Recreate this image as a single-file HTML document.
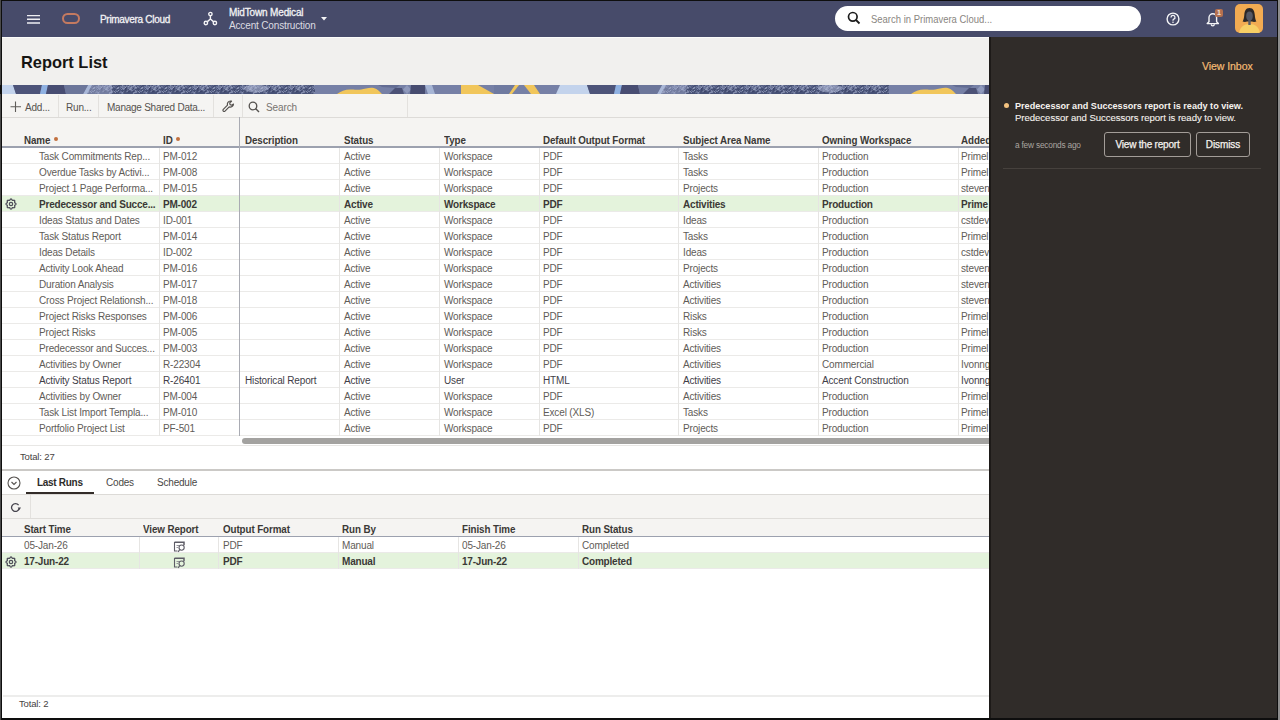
<!DOCTYPE html><html><head><meta charset="utf-8"><style>
*{margin:0;padding:0;box-sizing:border-box}
html,body{width:1280px;height:720px;overflow:hidden;background:#0e0e0e;font-family:"Liberation Sans",sans-serif}
.a{position:absolute}
.t{position:absolute;white-space:nowrap;line-height:16px}
.gh{position:absolute;white-space:nowrap;font-weight:bold;font-size:10.6px;color:#3b3936;letter-spacing:-0.1px;transform:scaleX(0.925);transform-origin:0 0}
.gb{font-size:10px;color:#5f5c58;letter-spacing:-0.15px}
.sel .gb{font-weight:bold;color:#3b3936;letter-spacing:-0.2px}
.vl{position:absolute;width:1px;background:#e6e5e3}
</style></head><body>

<div class="a" style="left:1278px;top:0;width:2px;height:720px;background:#8c8c8c"></div>
<div class="a" style="left:0;top:0;width:1px;height:720px;background:#4a4a4a"></div>
<div class="a" style="left:2px;top:1px;width:1275px;height:36px;background:#474b6a"></div>
<svg class="a" style="left:0;top:0" width="60" height="37" viewBox="0 0 60 37"><path d="M27 15.6H40M27 19.3H40M27 23H40" stroke="#eeeef2" stroke-width="1.4"/></svg>
<div class="a" style="left:62px;top:13px;width:18px;height:11px;border:2.1px solid #c47a60;border-radius:6px"></div>
<div class="t" style="left:100px;top:12px;font-size:10px;color:#f2f2f4;letter-spacing:-0.3px;-webkit-text-stroke:0.3px #f2f2f4">Primavera Cloud</div>
<svg class="a" style="left:203px;top:11px" width="15" height="15" viewBox="0 0 15 15"><g stroke="#f4f4f6" fill="none"><path d="M7.4 5V8L4.4 10.6M7.4 8L10.4 10.6" stroke-width="1.4"/><circle cx="7.4" cy="3.1" r="1.7" stroke-width="1.4"/><circle cx="2.9" cy="12" r="1.7" stroke-width="1.4"/><circle cx="11.9" cy="12" r="1.7" stroke-width="1.4"/></g></svg>
<div class="t" style="left:229px;top:5px;font-size:10px;color:#f2f2f4;letter-spacing:-0.15px;-webkit-text-stroke:0.3px #f2f2f4">MidTown Medical</div>
<div class="t" style="left:229px;top:18px;font-size:10px;color:#dcdce2;letter-spacing:-0.15px">Accent Construction</div>
<svg class="a" style="left:321px;top:17px" width="6" height="4" viewBox="0 0 6 4"><path d="M0 0H6L3 3.5Z" fill="#f4f4f6"/></svg>
<div class="a" style="left:835px;top:6px;width:306px;height:25px;background:#fff;border-radius:12.5px"></div>
<svg class="a" style="left:847px;top:11px" width="14" height="14" viewBox="0 0 14 14"><circle cx="5.8" cy="5.8" r="4.3" fill="none" stroke="#1c1c1c" stroke-width="1.7"/><line x1="9" y1="9" x2="12.5" y2="12.5" stroke="#1c1c1c" stroke-width="1.8"/></svg>
<div class="t" style="left:871px;top:10.7px;font-size:10.6px;color:#8a8681;letter-spacing:0;transform:scaleX(0.895);transform-origin:0 0">Search in Primavera Cloud...</div>
<svg class="a" style="left:1166px;top:12px" width="14" height="14" viewBox="0 0 14 14"><circle cx="7" cy="7" r="5.9" fill="none" stroke="#f4f4f6" stroke-width="1.4"/><path d="M5 5.4a2 2 0 1 1 2.8 1.8c-.6.3-.8.6-.8 1.2v.4" fill="none" stroke="#f4f4f6" stroke-width="1.3"/><circle cx="7" cy="10.3" r=".8" fill="#f4f4f6"/></svg>
<svg class="a" style="left:1206px;top:11px" width="14" height="16" viewBox="0 0 14 16"><path d="M3 10.8V6.6A3.8 3.8 0 0 1 10.6 6.6V10.8L12.4 12.6H1.2Z" fill="none" stroke="#f4f4f6" stroke-width="1.4" stroke-linejoin="round"/><path d="M5.2 13.2A1.6 1.6 0 0 0 8.4 13.2" fill="none" stroke="#f4f4f6" stroke-width="1.3"/></svg>
<div class="a" style="left:1215px;top:9px;width:8px;height:8px;background:#b4704f;border-radius:2px"></div>
<div class="t" style="left:1217px;top:5px;font-size:7px;color:#f7e4d4;font-weight:bold;line-height:16px">1</div>
<svg class="a" style="left:1235px;top:4px" width="28" height="29" viewBox="0 0 28 29"><defs><clipPath id="av"><rect width="28" height="29" rx="5"/></clipPath></defs><g clip-path="url(#av)"><rect width="28" height="29" fill="#f2ab52"/><path d="M4 29C5 23 9 20 14.5 20S24 23 25 29Z" fill="#f7cf66"/><path d="M14.5 4C10.5 4 9.5 7.5 9.3 11C9 14 8.5 16 7.6 17.6C9.5 18.3 11 18 12 17.6L17 17.6C18 18 19.5 18.3 21.4 17.6C20.5 16 20 14 19.8 11C19.5 7.5 18.5 4 14.5 4Z" fill="#2c2829"/><path d="M13.3 16V21H15.7V16Z" fill="#585c68"/><ellipse cx="14.5" cy="12" rx="3.3" ry="4.6" fill="#555865"/></g></svg>
<div class="a" style="left:2px;top:37px;width:987px;height:681px;background:#fff"></div>
<div class="a" style="left:2px;top:37px;width:987px;height:48px;background:#f1f0ee;border-top:1px solid #fbfbfa"></div>
<div class="t" style="left:21px;top:52px;font-size:16.4px;font-weight:bold;color:#161513;line-height:20px">Report List</div>
<svg class="a" style="left:0;top:85px" width="990" height="9" viewBox="0 0 990 9" shape-rendering="geometricPrecision"><defs><pattern id="tx" width="24" height="9" patternUnits="userSpaceOnUse"><rect width="24" height="9" fill="#465075"/><path d="M7.8 1.4l-1.6 -1.4" stroke="#8e98bb" stroke-width="0.8"/><path d="M21.8 1.9l-2.2 -1.3" stroke="#353c62" stroke-width="0.8"/><path d="M1.4 5.1l-2.4 -1.7" stroke="#353c62" stroke-width="0.8"/><path d="M1.2 2.0l-1.9 -1.6" stroke="#7983a8" stroke-width="0.8"/><path d="M13.4 6.1l-2.4 -1.4" stroke="#8e98bb" stroke-width="0.8"/><path d="M13.5 5.6l2.5 1.9" stroke="#353c62" stroke-width="0.8"/><path d="M14.1 4.1l1.9 -1.8" stroke="#a3acc9" stroke-width="0.8"/><path d="M2.0 2.7l2.8 1.3" stroke="#8e98bb" stroke-width="0.8"/><path d="M2.8 3.8l1.7 1.5" stroke="#8e98bb" stroke-width="0.8"/><path d="M18.3 5.2l2.0 1.7" stroke="#353c62" stroke-width="0.8"/><path d="M1.7 0.8l2.2 -1.1" stroke="#7983a8" stroke-width="0.8"/><path d="M15.5 8.9l1.9 2.1" stroke="#7983a8" stroke-width="0.8"/><path d="M0.5 4.2l-2.4 1.1" stroke="#7983a8" stroke-width="0.8"/><path d="M3.1 2.2l2.9 1.1" stroke="#353c62" stroke-width="0.8"/><path d="M9.6 2.5l-2.7 1.8" stroke="#7983a8" stroke-width="0.8"/><path d="M16.4 3.4l-1.7 -1.2" stroke="#a3acc9" stroke-width="0.8"/><path d="M0.3 7.5l-1.9 -1.2" stroke="#7983a8" stroke-width="0.8"/><path d="M14.6 2.9l-2.5 -1.5" stroke="#353c62" stroke-width="0.8"/><path d="M9.6 3.5l2.5 -1.2" stroke="#a3acc9" stroke-width="0.8"/><path d="M10.6 1.0l-1.7 -1.6" stroke="#7983a8" stroke-width="0.8"/><path d="M14.7 0.6l-2.4 -1.8" stroke="#7983a8" stroke-width="0.8"/><path d="M14.5 4.3l-2.8 1.6" stroke="#7983a8" stroke-width="0.8"/><path d="M2.1 0.9l2.6 2.0" stroke="#a3acc9" stroke-width="0.8"/><path d="M12.4 1.8l1.7 -1.9" stroke="#7983a8" stroke-width="0.8"/><path d="M23.5 7.8l2.3 -1.4" stroke="#a3acc9" stroke-width="0.8"/><path d="M12.8 7.0l2.5 -2.0" stroke="#353c62" stroke-width="0.8"/><path d="M17.8 2.0l2.0 -2.2" stroke="#7983a8" stroke-width="0.8"/><path d="M11.3 1.7l2.2 2.1" stroke="#7983a8" stroke-width="0.8"/><path d="M1.9 0.9l1.8 -1.6" stroke="#8e98bb" stroke-width="0.8"/><path d="M11.5 5.9l-2.8 -2.1" stroke="#a3acc9" stroke-width="0.8"/><path d="M11.5 1.6l1.6 1.6" stroke="#8e98bb" stroke-width="0.8"/><path d="M17.4 1.5l-1.5 2.0" stroke="#a3acc9" stroke-width="0.8"/><path d="M14.7 5.4l2.5 1.2" stroke="#a3acc9" stroke-width="0.8"/><path d="M0.5 7.2l-2.3 -1.5" stroke="#a3acc9" stroke-width="0.8"/><path d="M19.8 1.9l1.8 -1.9" stroke="#7983a8" stroke-width="0.8"/><path d="M6.2 3.8l-1.6 2.1" stroke="#353c62" stroke-width="0.8"/><path d="M19.9 7.9l-2.3 -2.0" stroke="#a3acc9" stroke-width="0.8"/><path d="M14.6 7.0l-1.8 1.7" stroke="#8e98bb" stroke-width="0.8"/><path d="M13.4 2.9l2.7 -2.1" stroke="#8e98bb" stroke-width="0.8"/><path d="M6.0 2.5l-2.3 -1.9" stroke="#8e98bb" stroke-width="0.8"/><path d="M10.6 5.5l-2.5 1.6" stroke="#353c62" stroke-width="0.8"/><path d="M12.2 2.2l2.9 -2.0" stroke="#a3acc9" stroke-width="0.8"/><path d="M10.0 3.5l1.6 -1.5" stroke="#a3acc9" stroke-width="0.8"/><path d="M16.1 7.1l-2.9 1.2" stroke="#a3acc9" stroke-width="0.8"/><path d="M23.2 2.0l-2.1 1.2" stroke="#a3acc9" stroke-width="0.8"/><path d="M3.9 3.9l2.0 -1.4" stroke="#8e98bb" stroke-width="0.8"/><path d="M17.3 0.2l2.2 -1.5" stroke="#7983a8" stroke-width="0.8"/><path d="M12.3 0.6l-3.0 -1.1" stroke="#7983a8" stroke-width="0.8"/><path d="M1.0 7.0l2.6 2.0" stroke="#7983a8" stroke-width="0.8"/><path d="M9.7 4.8l2.6 -1.3" stroke="#a3acc9" stroke-width="0.8"/><path d="M10.2 0.7l-2.5 1.1" stroke="#a3acc9" stroke-width="0.8"/><path d="M1.6 7.8l1.5 2.1" stroke="#7983a8" stroke-width="0.8"/><path d="M14.9 0.4l-2.9 -1.3" stroke="#a3acc9" stroke-width="0.8"/><path d="M4.8 2.8l2.3 -1.3" stroke="#a3acc9" stroke-width="0.8"/><path d="M6.5 7.2l1.6 -1.9" stroke="#a3acc9" stroke-width="0.8"/><path d="M12.3 2.2l1.7 1.8" stroke="#353c62" stroke-width="0.8"/><path d="M23.3 2.8l-3.0 1.2" stroke="#a3acc9" stroke-width="0.8"/><path d="M9.7 3.1l-2.8 -1.1" stroke="#7983a8" stroke-width="0.8"/><path d="M10.3 0.5l2.8 1.7" stroke="#7983a8" stroke-width="0.8"/><path d="M1.1 1.7l2.2 1.4" stroke="#7983a8" stroke-width="0.8"/><path d="M23.3 4.9l-1.6 1.3" stroke="#a3acc9" stroke-width="0.8"/><path d="M0.0 3.4l1.9 -1.3" stroke="#8e98bb" stroke-width="0.8"/><path d="M2.2 7.4l-2.1 -1.5" stroke="#7983a8" stroke-width="0.8"/><path d="M7.3 2.1l-2.5 1.9" stroke="#353c62" stroke-width="0.8"/><path d="M3.6 6.5l-1.6 1.9" stroke="#a3acc9" stroke-width="0.8"/><path d="M21.8 6.8l-2.7 -1.1" stroke="#8e98bb" stroke-width="0.8"/><path d="M3.2 3.2l-2.1 1.7" stroke="#8e98bb" stroke-width="0.8"/><path d="M15.0 6.1l1.9 2.0" stroke="#8e98bb" stroke-width="0.8"/><path d="M15.8 0.6l1.9 -2.0" stroke="#a3acc9" stroke-width="0.8"/><path d="M17.5 1.8l2.2 1.1" stroke="#7983a8" stroke-width="0.8"/></pattern></defs><rect x="2" y="0" width="988" height="9" fill="#7680a6"/><rect x="88" y="0" width="227" height="9" fill="url(#tx)"/><rect x="88" y="0" width="24" height="9" fill="#aab4d4" opacity="0.45"/><ellipse cx="256" cy="3.5" rx="12" ry="4" fill="#b9c2de" opacity="0.5"/><polygon points="88,0 92,0 87,9 83,9" fill="#aab8d8"/><path d="M337 9C341 6 346 4 352 4.5S360 5 366 3.5S376 2 382 9Z" fill="#f1c65b"/><polygon points="378,0 400,0 396,3 382,2" fill="#636c93"/><polygon points="389,9 395,3 402,3 404,9" fill="#4c5277"/><polygon points="403,4.5 407,0 411,4.5 407,9" fill="#8f99bc"/><polygon points="411,0 425,0 425,9 410,9" fill="#474c70"/><polygon points="425,0 432,0 435,9 428,9" fill="#a6b5d5"/><polygon points="461,0 478,0 494,9 461,9" fill="#f1c65b"/><polygon points="494,0 515,0 509,9 494,9" fill="#6f7aa0"/><polygon points="515,0 519,0 512,9 509,9" fill="#f1c65b"/><polygon points="524,0 534,0 540,9 531,9" fill="#f1c65b"/><polygon points="-14,0 13,0 16,9 -18,9" fill="#c3d3ec"/><polygon points="13,0 42,0 40,9 16,9" fill="#4d5479"/><polygon points="42,0 48,0 46,9 40,9" fill="#8fb1e2"/><polygon points="48,0 64,0 66,9 46,9" fill="#484d72"/><polygon points="64,0 88,0 83,9 66,9" fill="#6c769a"/><rect x="662" y="0" width="227" height="9" fill="url(#tx)"/><rect x="662" y="0" width="24" height="9" fill="#aab4d4" opacity="0.45"/><ellipse cx="830" cy="3.5" rx="12" ry="4" fill="#b9c2de" opacity="0.5"/><polygon points="662,0 666,0 661,9 657,9" fill="#aab8d8"/><path d="M911 9C915 6 920 4 926 4.5S934 5 940 3.5S950 2 956 9Z" fill="#f1c65b"/><polygon points="952,0 974,0 970,3 956,2" fill="#636c93"/><polygon points="963,9 969,3 976,3 978,9" fill="#4c5277"/><polygon points="977,4.5 981,0 985,4.5 981,9" fill="#8f99bc"/><polygon points="985,0 999,0 999,9 984,9" fill="#474c70"/><polygon points="999,0 1006,0 1009,9 1002,9" fill="#a6b5d5"/><polygon points="1035,0 1052,0 1068,9 1035,9" fill="#f1c65b"/><polygon points="1068,0 1089,0 1083,9 1068,9" fill="#6f7aa0"/><polygon points="1089,0 1093,0 1086,9 1083,9" fill="#f1c65b"/><polygon points="1098,0 1108,0 1114,9 1105,9" fill="#f1c65b"/><polygon points="560,0 587,0 590,9 556,9" fill="#c3d3ec"/><polygon points="587,0 616,0 614,9 590,9" fill="#4d5479"/><polygon points="616,0 622,0 620,9 614,9" fill="#8fb1e2"/><polygon points="622,0 638,0 640,9 620,9" fill="#484d72"/><polygon points="638,0 662,0 657,9 640,9" fill="#6c769a"/><rect x="0" y="0" width="2" height="9" fill="#0e0e0e"/></svg>
<div class="a" style="left:2px;top:94px;width:987px;height:24px;background:#f5f4f2;border-bottom:1px solid #dddbd8"></div>
<div class="a" style="left:58px;top:95px;width:1px;height:22px;background:#e3e1de"></div>
<div class="a" style="left:98px;top:95px;width:1px;height:22px;background:#e3e1de"></div>
<div class="a" style="left:213px;top:95px;width:1px;height:22px;background:#e3e1de"></div>
<div class="a" style="left:242px;top:95px;width:1px;height:22px;background:#e3e1de"></div>
<div class="a" style="left:407px;top:95px;width:1px;height:22px;background:#e3e1de"></div>
<svg class="a" style="left:10px;top:101px" width="12" height="12" viewBox="0 0 12 12"><path d="M5.5 0.5V11M0.5 5.75H11" stroke="#5f5c59" stroke-width="1.1"/></svg>
<div class="t" style="left:25px;top:99.5px;font-size:10px;color:#55524f;letter-spacing:-0.2px">Add...</div>
<div class="t" style="left:66px;top:99.5px;font-size:10px;color:#55524f;letter-spacing:-0.2px">Run...</div>
<div class="t" style="left:107px;top:99.5px;font-size:10px;color:#55524f;letter-spacing:-0.25px">Manage Shared Data...</div>
<svg class="a" style="left:222px;top:100px" width="13" height="13" viewBox="0 0 13 13"><path d="M8.5 1a3.2 3.2 0 0 0-3 4.2L1.3 9.4a1.2 1.2 0 0 0 1.7 1.7l4.2-4.2A3.2 3.2 0 0 0 11.5 4l-1.8 1.2-1.6-.6-.4-1.7L9.5 1.2Z" fill="none" stroke="#55524f" stroke-width="1.2" stroke-linejoin="round"/></svg>
<svg class="a" style="left:248px;top:101px" width="12" height="12" viewBox="0 0 12 12"><circle cx="5" cy="5" r="3.8" fill="none" stroke="#55524f" stroke-width="1.3"/><line x1="7.8" y1="7.8" x2="11" y2="11" stroke="#55524f" stroke-width="1.4"/></svg>
<div class="t" style="left:266px;top:99.5px;font-size:10px;color:#77736f;letter-spacing:-0.1px">Search</div>
<div class="a" style="left:2px;top:118px;width:987px;height:28px;background:#f5f4f2"></div>
<div class="a" style="left:2px;top:146px;width:987px;height:2px;background:#9ca1af"></div>
<div class="gh" style="left:24px;top:132px;line-height:16px">Name</div>
<div class="gh" style="left:163px;top:132px;line-height:16px">ID</div>
<div class="gh" style="left:245px;top:132px;line-height:16px">Description</div>
<div class="gh" style="left:344px;top:132px;line-height:16px">Status</div>
<div class="gh" style="left:444px;top:132px;line-height:16px">Type</div>
<div class="gh" style="left:543px;top:132px;line-height:16px">Default Output Format</div>
<div class="gh" style="left:683px;top:132px;line-height:16px">Subject Area Name</div>
<div class="gh" style="left:822px;top:132px;line-height:16px">Owning Workspace</div>
<div class="gh" style="left:961px;top:132px;line-height:16px">Added</div>
<div class="a" style="left:54px;top:136.5px;width:4px;height:4px;border-radius:2px;background:#c2703f"></div>
<div class="a" style="left:176px;top:136.5px;width:4px;height:4px;border-radius:2px;background:#c2703f"></div>
<div class="a" style="left:2px;top:148px;width:987px;height:16px;background:#fff;border-bottom:1px solid #ebeae8">
<div class="t gb" style="left:37px;top:0.5px">Task Commitments Rep...</div>
<div class="t gb" style="left:161px;top:0.5px">PM-012</div>
<div class="t gb" style="left:342px;top:0.5px">Active</div>
<div class="t gb" style="left:442px;top:0.5px">Workspace</div>
<div class="t gb" style="left:541px;top:0.5px">PDF</div>
<div class="t gb" style="left:681px;top:0.5px">Tasks</div>
<div class="t gb" style="left:820px;top:0.5px">Production</div>
<div class="t gb" style="left:959px;top:0.5px">Primel</div>
</div>
<div class="a" style="left:2px;top:164px;width:987px;height:16px;background:#fff;border-bottom:1px solid #ebeae8">
<div class="t gb" style="left:37px;top:0.5px">Overdue Tasks by Activi...</div>
<div class="t gb" style="left:161px;top:0.5px">PM-008</div>
<div class="t gb" style="left:342px;top:0.5px">Active</div>
<div class="t gb" style="left:442px;top:0.5px">Workspace</div>
<div class="t gb" style="left:541px;top:0.5px">PDF</div>
<div class="t gb" style="left:681px;top:0.5px">Tasks</div>
<div class="t gb" style="left:820px;top:0.5px">Production</div>
<div class="t gb" style="left:959px;top:0.5px">Primel</div>
</div>
<div class="a" style="left:2px;top:180px;width:987px;height:16px;background:#fff;border-bottom:1px solid #ebeae8">
<div class="t gb" style="left:37px;top:0.5px">Project 1 Page Performa...</div>
<div class="t gb" style="left:161px;top:0.5px">PM-015</div>
<div class="t gb" style="left:342px;top:0.5px">Active</div>
<div class="t gb" style="left:442px;top:0.5px">Workspace</div>
<div class="t gb" style="left:541px;top:0.5px">PDF</div>
<div class="t gb" style="left:681px;top:0.5px">Projects</div>
<div class="t gb" style="left:820px;top:0.5px">Production</div>
<div class="t gb" style="left:959px;top:0.5px">steven</div>
</div>
<div class="a sel" style="left:2px;top:196px;width:987px;height:16px;background:#e4f3dc;border-bottom:1px solid #ebeae8">
<div class="t gb" style="left:37px;top:0.5px">Predecessor and Succe...</div>
<div class="t gb" style="left:161px;top:0.5px">PM-002</div>
<div class="t gb" style="left:342px;top:0.5px">Active</div>
<div class="t gb" style="left:442px;top:0.5px">Workspace</div>
<div class="t gb" style="left:541px;top:0.5px">PDF</div>
<div class="t gb" style="left:681px;top:0.5px">Activities</div>
<div class="t gb" style="left:820px;top:0.5px">Production</div>
<div class="t gb" style="left:959px;top:0.5px">Prime</div>
</div>
<svg width="12" height="12" viewBox="0 0 12 12" style="position:absolute;left:4.5px;top:198.25px"><path d="M9.65 7.51 L9.61 7.78 L9.66 8.11 L9.74 8.50 L9.79 8.91 L9.74 9.28 L9.57 9.57 L9.28 9.74 L8.91 9.79 L8.50 9.74 L8.11 9.66 L7.78 9.61 L7.51 9.65 L7.29 9.81 L7.09 10.08 L6.88 10.41 L6.62 10.73 L6.33 10.97 L6.00 11.05 L5.67 10.97 L5.38 10.73 L5.12 10.41 L4.91 10.08 L4.71 9.81 L4.49 9.65 L4.22 9.61 L3.89 9.66 L3.50 9.74 L3.09 9.79 L2.72 9.74 L2.43 9.57 L2.26 9.28 L2.21 8.91 L2.26 8.50 L2.34 8.11 L2.39 7.78 L2.35 7.51 L2.19 7.29 L1.92 7.09 L1.59 6.88 L1.27 6.62 L1.03 6.33 L0.95 6.00 L1.03 5.67 L1.27 5.38 L1.59 5.12 L1.92 4.91 L2.19 4.71 L2.35 4.49 L2.39 4.22 L2.34 3.89 L2.26 3.50 L2.21 3.09 L2.26 2.72 L2.43 2.43 L2.72 2.26 L3.09 2.21 L3.50 2.26 L3.89 2.34 L4.22 2.39 L4.49 2.35 L4.71 2.19 L4.91 1.92 L5.12 1.59 L5.38 1.27 L5.67 1.03 L6.00 0.95 L6.33 1.03 L6.62 1.27 L6.88 1.59 L7.09 1.92 L7.29 2.19 L7.51 2.35 L7.78 2.39 L8.11 2.34 L8.50 2.26 L8.91 2.21 L9.28 2.26 L9.57 2.43 L9.74 2.72 L9.79 3.09 L9.74 3.50 L9.66 3.89 L9.61 4.22 L9.65 4.49 L9.81 4.71 L10.08 4.91 L10.41 5.12 L10.73 5.38 L10.97 5.67 L11.05 6.00 L10.97 6.33 L10.73 6.62 L10.41 6.88 L10.08 7.09 L9.81 7.29Z" fill="none" stroke="#4f4e5a" stroke-width="1.25"/><circle cx="6" cy="6" r="1.7" fill="none" stroke="#4f4e5a" stroke-width="1.2"/></svg>
<div class="a" style="left:2px;top:212px;width:987px;height:16px;background:#fff;border-bottom:1px solid #ebeae8">
<div class="t gb" style="left:37px;top:0.5px">Ideas Status and Dates</div>
<div class="t gb" style="left:161px;top:0.5px">ID-001</div>
<div class="t gb" style="left:342px;top:0.5px">Active</div>
<div class="t gb" style="left:442px;top:0.5px">Workspace</div>
<div class="t gb" style="left:541px;top:0.5px">PDF</div>
<div class="t gb" style="left:681px;top:0.5px">Ideas</div>
<div class="t gb" style="left:820px;top:0.5px">Production</div>
<div class="t gb" style="left:959px;top:0.5px">cstdev</div>
</div>
<div class="a" style="left:2px;top:228px;width:987px;height:16px;background:#fff;border-bottom:1px solid #ebeae8">
<div class="t gb" style="left:37px;top:0.5px">Task Status Report</div>
<div class="t gb" style="left:161px;top:0.5px">PM-014</div>
<div class="t gb" style="left:342px;top:0.5px">Active</div>
<div class="t gb" style="left:442px;top:0.5px">Workspace</div>
<div class="t gb" style="left:541px;top:0.5px">PDF</div>
<div class="t gb" style="left:681px;top:0.5px">Tasks</div>
<div class="t gb" style="left:820px;top:0.5px">Production</div>
<div class="t gb" style="left:959px;top:0.5px">Primel</div>
</div>
<div class="a" style="left:2px;top:244px;width:987px;height:16px;background:#fff;border-bottom:1px solid #ebeae8">
<div class="t gb" style="left:37px;top:0.5px">Ideas Details</div>
<div class="t gb" style="left:161px;top:0.5px">ID-002</div>
<div class="t gb" style="left:342px;top:0.5px">Active</div>
<div class="t gb" style="left:442px;top:0.5px">Workspace</div>
<div class="t gb" style="left:541px;top:0.5px">PDF</div>
<div class="t gb" style="left:681px;top:0.5px">Ideas</div>
<div class="t gb" style="left:820px;top:0.5px">Production</div>
<div class="t gb" style="left:959px;top:0.5px">cstdev</div>
</div>
<div class="a" style="left:2px;top:260px;width:987px;height:16px;background:#fff;border-bottom:1px solid #ebeae8">
<div class="t gb" style="left:37px;top:0.5px">Activity Look Ahead</div>
<div class="t gb" style="left:161px;top:0.5px">PM-016</div>
<div class="t gb" style="left:342px;top:0.5px">Active</div>
<div class="t gb" style="left:442px;top:0.5px">Workspace</div>
<div class="t gb" style="left:541px;top:0.5px">PDF</div>
<div class="t gb" style="left:681px;top:0.5px">Projects</div>
<div class="t gb" style="left:820px;top:0.5px">Production</div>
<div class="t gb" style="left:959px;top:0.5px">steven</div>
</div>
<div class="a" style="left:2px;top:276px;width:987px;height:16px;background:#fff;border-bottom:1px solid #ebeae8">
<div class="t gb" style="left:37px;top:0.5px">Duration Analysis</div>
<div class="t gb" style="left:161px;top:0.5px">PM-017</div>
<div class="t gb" style="left:342px;top:0.5px">Active</div>
<div class="t gb" style="left:442px;top:0.5px">Workspace</div>
<div class="t gb" style="left:541px;top:0.5px">PDF</div>
<div class="t gb" style="left:681px;top:0.5px">Activities</div>
<div class="t gb" style="left:820px;top:0.5px">Production</div>
<div class="t gb" style="left:959px;top:0.5px">steven</div>
</div>
<div class="a" style="left:2px;top:292px;width:987px;height:16px;background:#fff;border-bottom:1px solid #ebeae8">
<div class="t gb" style="left:37px;top:0.5px">Cross Project Relationsh...</div>
<div class="t gb" style="left:161px;top:0.5px">PM-018</div>
<div class="t gb" style="left:342px;top:0.5px">Active</div>
<div class="t gb" style="left:442px;top:0.5px">Workspace</div>
<div class="t gb" style="left:541px;top:0.5px">PDF</div>
<div class="t gb" style="left:681px;top:0.5px">Activities</div>
<div class="t gb" style="left:820px;top:0.5px">Production</div>
<div class="t gb" style="left:959px;top:0.5px">steven</div>
</div>
<div class="a" style="left:2px;top:308px;width:987px;height:16px;background:#fff;border-bottom:1px solid #ebeae8">
<div class="t gb" style="left:37px;top:0.5px">Project Risks Responses</div>
<div class="t gb" style="left:161px;top:0.5px">PM-006</div>
<div class="t gb" style="left:342px;top:0.5px">Active</div>
<div class="t gb" style="left:442px;top:0.5px">Workspace</div>
<div class="t gb" style="left:541px;top:0.5px">PDF</div>
<div class="t gb" style="left:681px;top:0.5px">Risks</div>
<div class="t gb" style="left:820px;top:0.5px">Production</div>
<div class="t gb" style="left:959px;top:0.5px">Primel</div>
</div>
<div class="a" style="left:2px;top:324px;width:987px;height:16px;background:#fff;border-bottom:1px solid #ebeae8">
<div class="t gb" style="left:37px;top:0.5px">Project Risks</div>
<div class="t gb" style="left:161px;top:0.5px">PM-005</div>
<div class="t gb" style="left:342px;top:0.5px">Active</div>
<div class="t gb" style="left:442px;top:0.5px">Workspace</div>
<div class="t gb" style="left:541px;top:0.5px">PDF</div>
<div class="t gb" style="left:681px;top:0.5px">Risks</div>
<div class="t gb" style="left:820px;top:0.5px">Production</div>
<div class="t gb" style="left:959px;top:0.5px">Primel</div>
</div>
<div class="a" style="left:2px;top:340px;width:987px;height:16px;background:#fff;border-bottom:1px solid #ebeae8">
<div class="t gb" style="left:37px;top:0.5px">Predecessor and Succes...</div>
<div class="t gb" style="left:161px;top:0.5px">PM-003</div>
<div class="t gb" style="left:342px;top:0.5px">Active</div>
<div class="t gb" style="left:442px;top:0.5px">Workspace</div>
<div class="t gb" style="left:541px;top:0.5px">PDF</div>
<div class="t gb" style="left:681px;top:0.5px">Activities</div>
<div class="t gb" style="left:820px;top:0.5px">Production</div>
<div class="t gb" style="left:959px;top:0.5px">Primel</div>
</div>
<div class="a" style="left:2px;top:356px;width:987px;height:16px;background:#fff;border-bottom:1px solid #ebeae8">
<div class="t gb" style="left:37px;top:0.5px">Activities by Owner</div>
<div class="t gb" style="left:161px;top:0.5px">R-22304</div>
<div class="t gb" style="left:342px;top:0.5px">Active</div>
<div class="t gb" style="left:442px;top:0.5px">Workspace</div>
<div class="t gb" style="left:541px;top:0.5px">PDF</div>
<div class="t gb" style="left:681px;top:0.5px">Activities</div>
<div class="t gb" style="left:820px;top:0.5px">Commercial</div>
<div class="t gb" style="left:959px;top:0.5px">Ivonng</div>
</div>
<div class="a" style="left:2px;top:372px;width:987px;height:16px;background:#fff;border-bottom:1px solid #ebeae8">
<div class="t gb" style="left:37px;top:0.5px;color:#3f3e48">Activity Status Report</div>
<div class="t gb" style="left:161px;top:0.5px;color:#3f3e48">R-26401</div>
<div class="t gb" style="left:243px;top:0.5px;color:#3f3e48">Historical Report</div>
<div class="t gb" style="left:342px;top:0.5px;color:#3f3e48">Active</div>
<div class="t gb" style="left:442px;top:0.5px;color:#3f3e48">User</div>
<div class="t gb" style="left:541px;top:0.5px;color:#3f3e48">HTML</div>
<div class="t gb" style="left:681px;top:0.5px;color:#3f3e48">Activities</div>
<div class="t gb" style="left:820px;top:0.5px;color:#3f3e48">Accent Construction</div>
<div class="t gb" style="left:959px;top:0.5px;color:#3f3e48">Ivonng</div>
</div>
<div class="a" style="left:2px;top:388px;width:987px;height:16px;background:#fff;border-bottom:1px solid #ebeae8">
<div class="t gb" style="left:37px;top:0.5px">Activities by Owner</div>
<div class="t gb" style="left:161px;top:0.5px">PM-004</div>
<div class="t gb" style="left:342px;top:0.5px">Active</div>
<div class="t gb" style="left:442px;top:0.5px">Workspace</div>
<div class="t gb" style="left:541px;top:0.5px">PDF</div>
<div class="t gb" style="left:681px;top:0.5px">Activities</div>
<div class="t gb" style="left:820px;top:0.5px">Production</div>
<div class="t gb" style="left:959px;top:0.5px">Primel</div>
</div>
<div class="a" style="left:2px;top:404px;width:987px;height:16px;background:#fff;border-bottom:1px solid #ebeae8">
<div class="t gb" style="left:37px;top:0.5px">Task List Import Templa...</div>
<div class="t gb" style="left:161px;top:0.5px">PM-010</div>
<div class="t gb" style="left:342px;top:0.5px">Active</div>
<div class="t gb" style="left:442px;top:0.5px">Workspace</div>
<div class="t gb" style="left:541px;top:0.5px">Excel (XLS)</div>
<div class="t gb" style="left:681px;top:0.5px">Tasks</div>
<div class="t gb" style="left:820px;top:0.5px">Production</div>
<div class="t gb" style="left:959px;top:0.5px">Primel</div>
</div>
<div class="a" style="left:2px;top:420px;width:987px;height:16px;background:#fff;border-bottom:1px solid #ebeae8">
<div class="t gb" style="left:37px;top:0.5px">Portfolio Project List</div>
<div class="t gb" style="left:161px;top:0.5px">PF-501</div>
<div class="t gb" style="left:342px;top:0.5px">Active</div>
<div class="t gb" style="left:442px;top:0.5px">Workspace</div>
<div class="t gb" style="left:541px;top:0.5px">PDF</div>
<div class="t gb" style="left:681px;top:0.5px">Projects</div>
<div class="t gb" style="left:820px;top:0.5px">Production</div>
<div class="t gb" style="left:959px;top:0.5px">Primel</div>
</div>
<div class="vl" style="left:159px;top:148px;height:288px"></div>
<div class="vl" style="left:339px;top:148px;height:288px"></div>
<div class="vl" style="left:439px;top:148px;height:288px"></div>
<div class="vl" style="left:539px;top:148px;height:288px"></div>
<div class="vl" style="left:678px;top:148px;height:288px"></div>
<div class="vl" style="left:818px;top:148px;height:288px"></div>
<div class="vl" style="left:958px;top:148px;height:288px"></div>
<div class="a" style="left:239px;top:117px;width:1.2px;height:319px;background:#a9abb3"></div>
<div class="a" style="left:242px;top:438px;width:760px;height:6px;background:#a3a2a0;border-radius:3px"></div>
<div class="a" style="left:2px;top:445px;width:987px;height:1px;background:#e8e7e5"></div>
<div class="t gb" style="left:20px;top:449px;font-size:9.5px;color:#46433f">Total: 27</div>
<div class="a" style="left:2px;top:469px;width:987px;height:2px;background:#cbc9c6"></div>
<svg class="a" style="left:7px;top:476px" width="14" height="14" viewBox="0 0 14 14"><circle cx="7" cy="7" r="6" fill="none" stroke="#55524f" stroke-width="1.1"/><path d="M4.5 6L7 8.5L9.5 6" fill="none" stroke="#55524f" stroke-width="1.1"/></svg>
<div class="t" style="left:37px;top:475px;font-size:10px;font-weight:bold;color:#2e2c2a;letter-spacing:-0.3px">Last Runs</div>
<div class="t" style="left:106px;top:475px;font-size:10px;color:#4a4745;letter-spacing:-0.2px">Codes</div>
<div class="t" style="left:157px;top:475px;font-size:10px;color:#4a4745;letter-spacing:-0.2px">Schedule</div>
<div class="a" style="left:26px;top:492px;width:68px;height:2px;background:#332c29"></div>
<div class="a" style="left:2px;top:494px;width:987px;height:1px;background:#dcdad7"></div>
<div class="a" style="left:2px;top:495px;width:987px;height:24px;background:#f5f4f2;border-bottom:1px solid #dfddda"></div>
<div class="a" style="left:30px;top:495px;width:1px;height:23px;background:#e3e1de"></div>
<svg class="a" style="left:9.5px;top:502px" width="11" height="11" viewBox="0 0 11 11"><path d="M8.6 3.2A3.9 3.9 0 1 0 9.3 6.2" fill="none" stroke="#45434d" stroke-width="1.3"/><path d="M7.7 5.4H11L9.4 8Z" fill="#45434d"/></svg>
<div class="a" style="left:2px;top:519px;width:987px;height:17px;background:#f5f4f2"></div>
<div class="a" style="left:2px;top:536px;width:987px;height:1.5px;background:#9ca1af"></div>
<div class="gh" style="left:24px;top:521px;line-height:16px">Start Time</div>
<div class="gh" style="left:143px;top:521px;line-height:16px">View Report</div>
<div class="gh" style="left:223px;top:521px;line-height:16px">Output Format</div>
<div class="gh" style="left:342px;top:521px;line-height:16px">Run By</div>
<div class="gh" style="left:462px;top:521px;line-height:16px">Finish Time</div>
<div class="gh" style="left:582px;top:521px;line-height:16px">Run Status</div>
<div class="a" style="left:2px;top:537px;width:987px;height:16px;background:#fff;border-bottom:1px solid #ebeae8">
<div class="t gb" style="left:22px;top:0.5px">05-Jan-26</div>
<div class="t gb" style="left:221px;top:0.5px">PDF</div>
<div class="t gb" style="left:340px;top:0.5px">Manual</div>
<div class="t gb" style="left:460px;top:0.5px">05-Jan-26</div>
<div class="t gb" style="left:580px;top:0.5px">Completed</div>
</div>
<svg class="a" style="left:173px;top:540.5px" width="13" height="12" viewBox="0 0 13 12"><path d="M1.5 1.3H11V4.2" fill="none" stroke="#5d5c66" stroke-width="1.5"/><path d="M1.5 1V10H4.5" fill="none" stroke="#5d5c66" stroke-width="1.1"/><path d="M3.5 4.5H6M3.5 6.5H5" stroke="#8a8990" stroke-width="0.9"/><circle cx="8.6" cy="6.6" r="2.6" fill="none" stroke="#5d5c66" stroke-width="1.1"/><path d="M6.8 8.5L5.2 10.8" stroke="#5d5c66" stroke-width="1.3"/></svg>
<div class="a sel" style="left:2px;top:553px;width:987px;height:16px;background:#e4f3dc;border-bottom:1px solid #ebeae8">
<div class="t gb" style="left:22px;top:0.5px">17-Jun-22</div>
<div class="t gb" style="left:221px;top:0.5px">PDF</div>
<div class="t gb" style="left:340px;top:0.5px">Manual</div>
<div class="t gb" style="left:460px;top:0.5px">17-Jun-22</div>
<div class="t gb" style="left:580px;top:0.5px">Completed</div>
</div>
<svg class="a" style="left:173px;top:556.5px" width="13" height="12" viewBox="0 0 13 12"><path d="M1.5 1.3H11V4.2" fill="none" stroke="#5d5c66" stroke-width="1.5"/><path d="M1.5 1V10H4.5" fill="none" stroke="#5d5c66" stroke-width="1.1"/><path d="M3.5 4.5H6M3.5 6.5H5" stroke="#8a8990" stroke-width="0.9"/><circle cx="8.6" cy="6.6" r="2.6" fill="none" stroke="#5d5c66" stroke-width="1.1"/><path d="M6.8 8.5L5.2 10.8" stroke="#5d5c66" stroke-width="1.3"/></svg>
<svg width="12" height="12" viewBox="0 0 12 12" style="position:absolute;left:4.5px;top:555.5px"><path d="M9.65 7.51 L9.61 7.78 L9.66 8.11 L9.74 8.50 L9.79 8.91 L9.74 9.28 L9.57 9.57 L9.28 9.74 L8.91 9.79 L8.50 9.74 L8.11 9.66 L7.78 9.61 L7.51 9.65 L7.29 9.81 L7.09 10.08 L6.88 10.41 L6.62 10.73 L6.33 10.97 L6.00 11.05 L5.67 10.97 L5.38 10.73 L5.12 10.41 L4.91 10.08 L4.71 9.81 L4.49 9.65 L4.22 9.61 L3.89 9.66 L3.50 9.74 L3.09 9.79 L2.72 9.74 L2.43 9.57 L2.26 9.28 L2.21 8.91 L2.26 8.50 L2.34 8.11 L2.39 7.78 L2.35 7.51 L2.19 7.29 L1.92 7.09 L1.59 6.88 L1.27 6.62 L1.03 6.33 L0.95 6.00 L1.03 5.67 L1.27 5.38 L1.59 5.12 L1.92 4.91 L2.19 4.71 L2.35 4.49 L2.39 4.22 L2.34 3.89 L2.26 3.50 L2.21 3.09 L2.26 2.72 L2.43 2.43 L2.72 2.26 L3.09 2.21 L3.50 2.26 L3.89 2.34 L4.22 2.39 L4.49 2.35 L4.71 2.19 L4.91 1.92 L5.12 1.59 L5.38 1.27 L5.67 1.03 L6.00 0.95 L6.33 1.03 L6.62 1.27 L6.88 1.59 L7.09 1.92 L7.29 2.19 L7.51 2.35 L7.78 2.39 L8.11 2.34 L8.50 2.26 L8.91 2.21 L9.28 2.26 L9.57 2.43 L9.74 2.72 L9.79 3.09 L9.74 3.50 L9.66 3.89 L9.61 4.22 L9.65 4.49 L9.81 4.71 L10.08 4.91 L10.41 5.12 L10.73 5.38 L10.97 5.67 L11.05 6.00 L10.97 6.33 L10.73 6.62 L10.41 6.88 L10.08 7.09 L9.81 7.29Z" fill="none" stroke="#4f4e5a" stroke-width="1.25"/><circle cx="6" cy="6" r="1.7" fill="none" stroke="#4f4e5a" stroke-width="1.2"/></svg>
<div class="vl" style="left:139px;top:537px;height:32px"></div>
<div class="vl" style="left:218px;top:537px;height:32px"></div>
<div class="vl" style="left:338px;top:537px;height:32px"></div>
<div class="vl" style="left:458px;top:537px;height:32px"></div>
<div class="vl" style="left:578px;top:537px;height:32px"></div>
<div class="a" style="left:3px;top:695px;width:986px;height:2px;background:#ededec"></div>
<div class="t gb" style="left:19px;top:696px;font-size:9.5px;color:#46433f">Total: 2</div>
<div class="a" style="left:989px;top:37px;width:288px;height:681px;background:#302c29;border-left:2px solid #1d1a18"></div>
<div class="t" style="left:1202px;top:57.5px;font-size:10.6px;color:#f2bb74;letter-spacing:-0.1px;-webkit-text-stroke:0.2px #f2bb74">View Inbox</div>
<div class="a" style="left:1004px;top:102.5px;width:5px;height:5px;border-radius:50%;background:#f3c27f"></div>
<div class="t" style="left:1015px;top:99.5px;font-size:9.1px;font-weight:bold;color:#f6f3ef;line-height:12px">Predecessor and Successors report is ready to view.</div>
<div class="t" style="left:1015px;top:112px;font-size:9.6px;color:#f4f1ed;line-height:12px;letter-spacing:-0.05px;-webkit-text-stroke:0.1px #f4f1ed">Predecessor and Successors report is ready to view.</div>
<div class="t" style="left:1015px;top:137px;font-size:8.3px;color:#aaa5a0;letter-spacing:-0.2px">a few seconds ago</div>
<div class="a" style="left:1104px;top:132px;width:87px;height:25px;border:1px solid #a39d98;border-radius:3px"></div>
<div class="t" style="left:1104px;top:136.5px;width:87px;text-align:center;font-size:10px;color:#f4f1ed;letter-spacing:-0.2px;-webkit-text-stroke:0.25px #f4f1ed">View the report</div>
<div class="a" style="left:1196px;top:132px;width:54px;height:25px;border:1px solid #a39d98;border-radius:3px"></div>
<div class="t" style="left:1196px;top:136.5px;width:54px;text-align:center;font-size:10px;color:#f4f1ed;letter-spacing:-0.1px;-webkit-text-stroke:0.25px #f4f1ed">Dismiss</div>
<div class="a" style="left:1003px;top:168px;width:258px;height:1px;background:#46413d"></div>
</body></html>
